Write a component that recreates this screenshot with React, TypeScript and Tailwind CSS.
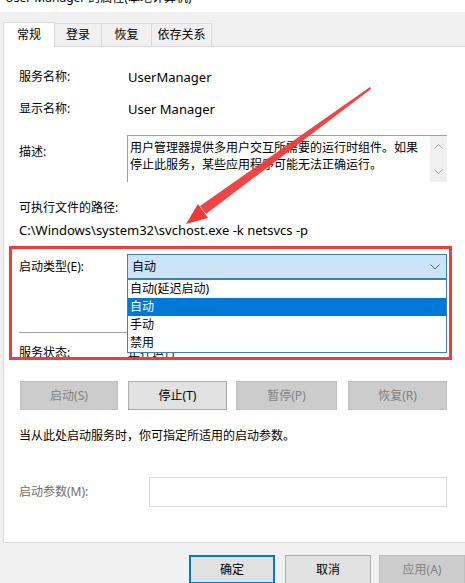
import React from 'react';

// Windows "service properties" dialog, General tab, with the red annotation
// box + arrow drawn over it.

const FONT = { fontFamily: '"Noto Sans", "Noto Sans CJK SC", sans-serif' };

const OPTIONS = ['自动(延迟启动)', '自动', '手动', '禁用'];
const SELECTED = 1;

function Tab({ label, active, width }: { label: string; active?: boolean; width: string }) {
  if (active) {
    return (
      <div
        className={`${width} relative z-10 -mb-px flex h-[25px] items-center justify-center border-x border-t border-[#d9d9d9] bg-white text-[12px]`}
      >
        {label}
      </div>
    );
  }
  return (
    <div
      className={`${width} flex h-[23px] items-center justify-center border-t border-r border-[#d9d9d9] bg-[#f0f0f0] text-[12px]`}
    >
      {label}
    </div>
  );
}

function Chevron({ up }: { up?: boolean }) {
  return (
    <svg width="9" height="5" viewBox="0 0 9 5" className="block">
      <polyline
        points={up ? '0.5,4.5 4.5,0.5 8.5,4.5' : '0.5,0.5 4.5,4.5 8.5,0.5'}
        fill="none"
        stroke="#a6a6a6"
        strokeWidth="1"
      />
    </svg>
  );
}

function ActionButton({
  label,
  enabled,
  className,
}: {
  label: string;
  enabled?: boolean;
  className: string;
}) {
  return (
    <div
      className={`${className} flex h-[29px] items-center justify-center border text-[12px] ${
        enabled
          ? 'border-[#adadad] bg-[#e1e1e1] text-black'
          : 'border-[#bfbfbf] bg-[#cccccc] text-[#838383]'
      }`}
    >
      {label}
    </div>
  );
}

function Arrow() {
  // tip near the svchost path, tail up by the description box
  return (
    <svg className="pointer-events-none absolute inset-0" width="465" height="583">
      <polygon points="370,87 371,89 206,214 200,206" fill="#f03a3a" opacity="0.95" />
      <polygon points="186,224 198,204 208,218" fill="#f03a3a" />
    </svg>
  );
}

export default function App() {
  return (
    <div
      className="relative h-[583px] w-[465px] overflow-hidden bg-[#f0f0f0] text-black"
      style={FONT}
    >
      {/* title bar, mostly scrolled out of view */}
      <div className="h-[12px] overflow-hidden bg-white pl-[5px]">
        <div className="-mt-[10px] whitespace-nowrap text-[12px] leading-[16px]">
          User Manager 的属性(本地计算机)
        </div>
      </div>

      {/* tabs */}
      <div className="flex h-[34px] items-end pl-[3px]">
        <Tab label="常规" active width="w-[52px]" />
        <Tab label="登录" width="w-[47px]" />
        <Tab label="恢复" width="w-[50px]" />
        <Tab label="依存关系" width="w-[60px]" />
      </div>

      {/* tab page */}
      <div className="ml-[3px] h-[497px] w-[470px] border border-[#d9d9d9] bg-white pl-[15px] text-[12px] leading-[16px]">
        <div className="mt-[22px] flex h-[16px] items-center">
          <span className="w-[109px]">服务名称:</span>
          <span className="text-[13px]">UserManager</span>
        </div>
        <div className="mt-[16px] flex h-[16px] items-center">
          <span className="w-[109px]">显示名称:</span>
          <span className="text-[13px]">User Manager</span>
        </div>

        <div className="mt-[18px] flex items-start">
          <span className="mt-[9px] w-[108px]">描述:</span>
          <div className="flex h-[47px] w-[320px] border-t border-l border-[#a0a0a0]">
            <div className="flex-1 pt-[3px] pr-[4px] pl-[2px] leading-[17px]">
              用户管理器提供多用户交互所需要的运行时组件。如果停止此服务，某些应用程序可能无法正确运行。
            </div>
            <div className="flex w-[17px] flex-col items-center justify-between bg-[#f0f0f0] py-[8px]">
              <Chevron up />
              <Chevron />
            </div>
          </div>
        </div>

        <div className="mt-[18px] h-[16px]">可执行文件的路径:</div>
        <div className="mt-[6px] h-[16px] text-[13px]">C:\Windows\system32\svchost.exe -k netsvcs -p</div>

        <div className="mt-[16px] flex items-center">
          <span className="w-[108px]">启动类型(E):</span>
          <div className="relative z-10 w-[320px]">
            <div className="flex h-[25px] items-center justify-between border border-[#3c7fb1] bg-[#cce4f7] pr-[6px] pl-[4px]">
              <span>自动</span>
              <svg width="10" height="6" viewBox="0 0 10 6">
                <polyline points="0.5,0.5 5,5 9.5,0.5" fill="none" stroke="#606060" strokeWidth="1" />
              </svg>
            </div>
            <div className="absolute top-full left-0 w-[320px] border border-[#3c7fb1] bg-white">
              {OPTIONS.map((opt, i) => (
                <div
                  key={opt}
                  className={`flex h-[18px] items-center pl-[2px] ${
                    i === SELECTED ? 'bg-[#0078d7] text-white' : ''
                  }`}
                >
                  {opt}
                </div>
              ))}
            </div>
          </div>
        </div>

        <div className="mt-[53px] h-px w-[428px] bg-[#a0a0a0]" />

        <div className="mt-[12px] flex h-[16px]">
          <span className="w-[109px]">服务状态:</span>
          <span>正在运行</span>
        </div>

        <div className="mt-[20px] flex">
          <ActionButton label="启动(S)" className="ml-[1px] w-[98px]" />
          <ActionButton label="停止(T)" enabled className="ml-[10px] w-[99px]" />
          <ActionButton label="暂停(P)" className="ml-[9px] w-[101px]" />
          <ActionButton label="恢复(R)" className="ml-[11px] w-[99px]" />
        </div>

        <div className="mt-[18px] h-[16px]">当从此处启动服务时，你可指定所适用的启动参数。</div>

        <div className="mt-[33px] flex items-center">
          <span className="w-[130px] text-[#6d6d6d]">启动参数(M):</span>
          <div className="h-[30px] w-[298px] border border-[#d9d9d9] bg-white" />
        </div>
      </div>

      {/* dialog buttons */}
      <div className="mt-[12px] flex pl-[189px] text-[12px]">
        <div className="flex h-[29px] w-[88px] items-center justify-center border-2 border-[#0078d7] bg-[#e1e1e1]">
          确定
        </div>
        <div className="ml-[10px] flex h-[29px] w-[88px] items-center justify-center border border-[#adadad] bg-[#e1e1e1]">
          取消
        </div>
        <div className="ml-[8px] flex h-[29px] w-[88px] items-center justify-center border border-[#bfbfbf] bg-[#cccccc] text-[#838383]">
          应用(A)
        </div>
      </div>

      {/* annotation */}
      <div className="pointer-events-none absolute top-[246px] left-[9px] z-20 h-[114px] w-[443px] border-[3px] border-[#f23c3c]" />
      <div className="z-20">
        <Arrow />
      </div>
    </div>
  );
}
